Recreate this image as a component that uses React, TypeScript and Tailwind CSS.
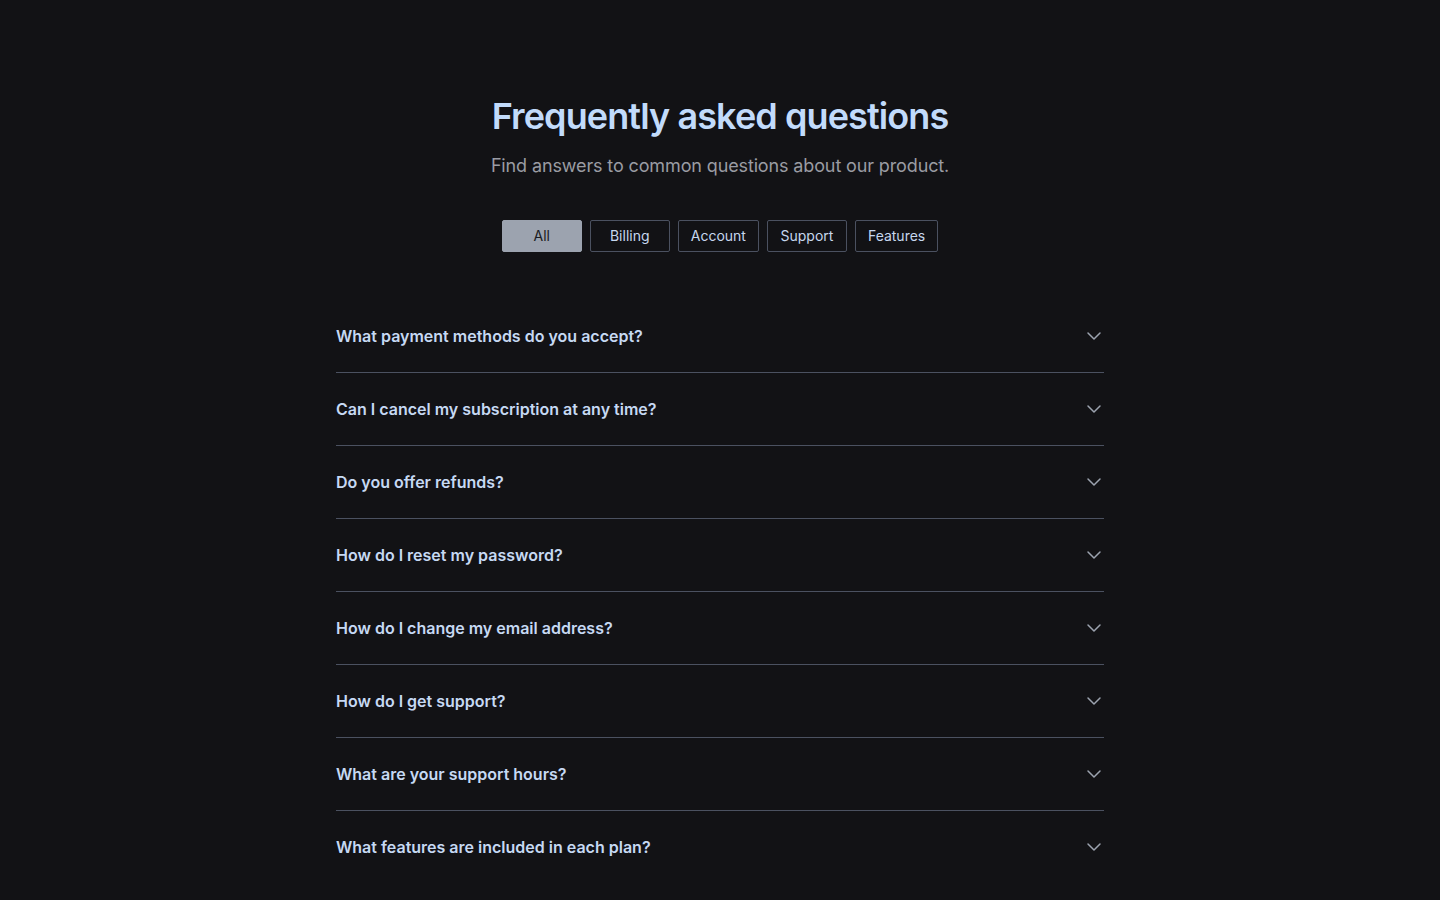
import React, { useState } from 'react';
import { ChevronDown } from 'lucide-react';

// --- DATA ---
interface Faq {
    q: string;
    a: string;
    cat: string;
}

const categories = ['All', 'Billing', 'Account', 'Support', 'Features'];

const faqs: Faq[] = [
    { q: 'What payment methods do you accept?', a: 'We accept all major credit cards, PayPal and bank transfers.', cat: 'Billing' },
    { q: 'Can I cancel my subscription at any time?', a: 'Yes, you can cancel at any time from your account settings.', cat: 'Billing' },
    { q: 'Do you offer refunds?', a: 'We offer a full refund within 30 days of purchase.', cat: 'Billing' },
    { q: 'How do I reset my password?', a: 'Click "Forgot password" on the login page and follow the steps.', cat: 'Account' },
    { q: 'How do I change my email address?', a: 'Go to account settings and update your email address.', cat: 'Account' },
    { q: 'How do I get support?', a: 'Contact us through the help center or by email.', cat: 'Support' },
    { q: 'What are your support hours?', a: 'Our team is available Monday to Friday, 9am to 6pm.', cat: 'Support' },
    { q: 'What features are included in each plan?', a: 'See our pricing page for a full comparison of plans.', cat: 'Features' },
];

export default function App() {
    const [active, setActive] = useState('All');
    const [open, setOpen] = useState<number | null>(null);

    const shown = faqs.filter((f) => active === 'All' || f.cat === active);

    return (
        <div className="min-h-screen bg-[#121215] font-['Inter',sans-serif]">
            <div className="max-w-3xl mx-auto pt-24 pb-24">
                {/* HEADER */}
                <div className="text-center">
                    <h1 className="text-4xl font-semibold text-[#c2dbfb] tracking-tight">
                        Frequently asked questions
                    </h1>
                    <p className="mt-4 text-lg text-[#9a9ca3] tracking-[-0.13px]">
                        Find answers to common questions about our product.
                    </p>
                </div>

                {/* FILTERS */}
                <div className="mt-10 flex justify-center gap-2">
                    {categories.map((c) => (
                        <button
                            key={c}
                            onClick={() => setActive(c)}
                            className={`h-8 min-w-20 px-3 rounded-[2px] border text-sm ${
                                active === c
                                    ? 'bg-[#9ca3af] border-[#9ca3af] text-[#1a1c22]'
                                    : 'bg-transparent border-[#4b5160] text-[#c6d7ee]'
                            }`}
                        >
                            {c}
                        </button>
                    ))}
                </div>

                {/* ACCORDION */}
                <div className="mt-12">
                    {shown.map((f, i) => (
                        <div key={f.q} className={i < shown.length - 1 ? 'border-b border-[#4b5160]' : ''}>
                            <button
                                onClick={() => setOpen(open === i ? null : i)}
                                className="w-full py-6 flex items-center justify-between text-left"
                            >
                                <span className="text-base font-semibold text-[#c6d9f3] leading-6">{f.q}</span>
                                <ChevronDown
                                    className={`w-6 h-6 -mr-0.5 text-[#9ca3af] transition-transform ${open === i ? 'rotate-180' : ''}`}
                                    strokeWidth={1.5}
                                />
                            </button>
                            {open === i && <p className="pb-6 text-sm text-[#9a9ca3]">{f.a}</p>}
                        </div>
                    ))}
                </div>
            </div>
        </div>
    );
}
